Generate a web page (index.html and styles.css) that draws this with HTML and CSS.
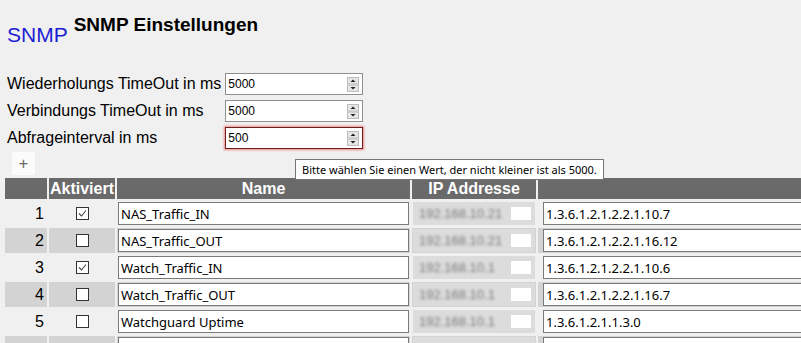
FILE: index.html
```html
<!DOCTYPE html>
<html lang="de">
<head>
    <meta charset="UTF-8">
    <title>SNMP Einstellungen</title>
    <link rel="stylesheet" href="styles.css">
</head>
<body>

    <div class="head">
        <span class="logo">SNMP</span>
        <h2 class="title">SNMP Einstellungen</h2>
    </div>

    <div class="settings">
        <label for="retryTimeout">Wiederholungs TimeOut in ms</label>
        <div class="num">
            <input type="text" id="retryTimeout" value="5000">
            <svg class="spin" width="12" height="15" viewBox="0 0 12 15"><rect x="0.5" y="0.5" width="11" height="6.5" fill="#e6e6e6" stroke="#bcbcbc"/><rect x="0.5" y="8" width="11" height="6.5" fill="#e6e6e6" stroke="#bcbcbc"/><path d="M3.5 5 L6 2.5 L8.5 5 Z" fill="#222"/><path d="M3.5 10 L6 12.5 L8.5 10 Z" fill="#222"/></svg>
        </div>

        <label for="connTimeout">Verbindungs TimeOut in ms</label>
        <div class="num">
            <input type="text" id="connTimeout" value="5000">
            <svg class="spin" width="12" height="15" viewBox="0 0 12 15"><rect x="0.5" y="0.5" width="11" height="6.5" fill="#e6e6e6" stroke="#bcbcbc"/><rect x="0.5" y="8" width="11" height="6.5" fill="#e6e6e6" stroke="#bcbcbc"/><path d="M3.5 5 L6 2.5 L8.5 5 Z" fill="#222"/><path d="M3.5 10 L6 12.5 L8.5 10 Z" fill="#222"/></svg>
        </div>

        <label for="pollInterval">Abfrageinterval in ms</label>
        <div class="num invalid">
            <input type="text" id="pollInterval" value="500">
            <svg class="spin" width="12" height="15" viewBox="0 0 12 15"><rect x="0.5" y="0.5" width="11" height="6.5" fill="#e6e6e6" stroke="#bcbcbc"/><rect x="0.5" y="8" width="11" height="6.5" fill="#e6e6e6" stroke="#bcbcbc"/><path d="M3.5 5 L6 2.5 L8.5 5 Z" fill="#222"/><path d="M3.5 10 L6 12.5 L8.5 10 Z" fill="#222"/></svg>
        </div>
    </div>

    <button class="add">+</button>

    <div class="tip">Bitte wählen Sie einen Wert, der nicht kleiner ist als 5000.</div>

    <table class="snmp">
        <colgroup>
            <col class="c-nr">
            <col class="c-akt">
            <col class="c-name">
            <col class="c-ip">
            <col class="c-oid">
        </colgroup>
        <tr>
            <th></th>
            <th>Aktiviert</th>
            <th>Name</th>
            <th>IP Addresse</th>
            <th></th>
        </tr>
        <tr>
            <td class="nr">1</td>
            <td class="akt"><svg width="13" height="13" viewBox="0 0 13 13"><rect x="0.5" y="0.5" width="12" height="12" fill="#fff" stroke="#333"/><path d="M3 6.5 L5.5 9 L10 3.5" fill="none" stroke="#444" stroke-width="1.1"/></svg></td>
            <td><input class="field" type="text" value="NAS_Traffic_IN"></td>
            <td><div class="ip"><span class="ipv">192.168.10.21</span><span class="ipend"></span></div></td>
            <td class="oid"><input class="field" type="text" value="1.3.6.1.2.1.2.2.1.10.7"></td>
        </tr>
        <tr class="alt">
            <td class="nr">2</td>
            <td class="akt"><svg width="13" height="13" viewBox="0 0 13 13"><rect x="0.5" y="0.5" width="12" height="12" fill="#fff" stroke="#333"/></svg></td>
            <td><input class="field" type="text" value="NAS_Traffic_OUT"></td>
            <td><div class="ip"><span class="ipv">192.168.10.21</span><span class="ipend"></span></div></td>
            <td class="oid"><input class="field" type="text" value="1.3.6.1.2.1.2.2.1.16.12"></td>
        </tr>
        <tr>
            <td class="nr">3</td>
            <td class="akt"><svg width="13" height="13" viewBox="0 0 13 13"><rect x="0.5" y="0.5" width="12" height="12" fill="#fff" stroke="#333"/><path d="M3 6.5 L5.5 9 L10 3.5" fill="none" stroke="#444" stroke-width="1.1"/></svg></td>
            <td><input class="field" type="text" value="Watch_Traffic_IN"></td>
            <td><div class="ip"><span class="ipv">192.168.10.1</span><span class="ipend"></span></div></td>
            <td class="oid"><input class="field" type="text" value="1.3.6.1.2.1.2.2.1.10.6"></td>
        </tr>
        <tr class="alt">
            <td class="nr">4</td>
            <td class="akt"><svg width="13" height="13" viewBox="0 0 13 13"><rect x="0.5" y="0.5" width="12" height="12" fill="#fff" stroke="#333"/></svg></td>
            <td><input class="field" type="text" value="Watch_Traffic_OUT"></td>
            <td><div class="ip"><span class="ipv">192.168.10.1</span><span class="ipend"></span></div></td>
            <td class="oid"><input class="field" type="text" value="1.3.6.1.2.1.2.2.1.16.7"></td>
        </tr>
        <tr>
            <td class="nr">5</td>
            <td class="akt"><svg width="13" height="13" viewBox="0 0 13 13"><rect x="0.5" y="0.5" width="12" height="12" fill="#fff" stroke="#333"/></svg></td>
            <td><input class="field" type="text" value="Watchguard Uptime"></td>
            <td><div class="ip"><span class="ipv">192.168.10.1</span><span class="ipend"></span></div></td>
            <td class="oid"><input class="field" type="text" value="1.3.6.1.2.1.1.3.0"></td>
        </tr>
        <tr class="alt">
            <td class="nr"></td>
            <td class="akt"></td>
            <td><input class="field" type="text" value=""></td>
            <td><div class="ip"></div></td>
            <td class="oid"><input class="field" type="text" value=""></td>
        </tr>
    </table>

</body>
</html>
```

FILE: styles.css
```css
body {
    margin: 0;
    padding: 0 0 0 3px;
    background-color: #f0f0f0;
    font-family: "Liberation Sans", Arial, sans-serif;
    color: #000;
    overflow: hidden;
    position: relative;
}

.head {
    display: flex;
    align-items: flex-start;
    gap: 6px;
    padding: 14px 0 0 4px;
}

.logo {
    color: #1d1dd2;
    font-size: 21px;
    line-height: 1.15;
    margin-top: 9px;
}

.title {
    margin: 0;
    font-size: 19px;
    line-height: 1.15;
}

.settings {
    display: grid;
    grid-template-columns: auto 138px;
    column-gap: 4px;
    row-gap: 5px;
    align-items: center;
    width: max-content;
    margin: 26px 0 0 4px;
}

label {
    font-size: 16px;
}

.num {
    display: flex;
    align-items: center;
    height: 22px;
    box-sizing: border-box;
    border: 1px solid #8f8f8f;
    background-color: #fff;
}

.num input {
    flex: 1;
    min-width: 0;
    border: 0;
    outline: 0;
    padding: 0 2px;
    background: transparent;
    font-family: "Liberation Sans", Arial, sans-serif;
    font-size: 12px;
}

.spin {
    margin-right: 3px;
}

.num.invalid {
    border-color: #6e1c1c;
    box-shadow: 0 0 2px 1px rgba(235, 70, 70, 0.6);
}

.add {
    display: block;
    width: 23px;
    height: 23px;
    margin: 3px 0 0 9px;
    padding: 0;
    border: 0;
    background-color: #fbfbfb;
    color: #666;
    font-size: 16px;
    font-family: "Liberation Sans", Arial, sans-serif;
}

.tip {
    position: absolute;
    left: 295px;
    top: 159px;
    padding: 0 6px;
    line-height: 19px;
    background-color: #fff;
    border: 1px solid #767676;
    font-family: "Noto Sans", sans-serif;
    font-size: 11px;
    white-space: nowrap;
    z-index: 2;
}

.snmp {
    table-layout: fixed;
    width: 837px;
    border-spacing: 2px;
    margin-top: 1px;
}

.c-nr { width: 42px; }
.c-akt { width: 66px; }
.c-name { width: 293px; }
.c-ip { width: 124px; }
.c-oid { width: 300px; }

.snmp th {
    background-color: #6a6a6a;
    color: #fff;
    font-size: 16px;
    font-weight: bold;
    line-height: 21px;
    padding: 0;
    white-space: nowrap;
}

.snmp td {
    padding: 1px;
}

.snmp tr.alt td {
    background-color: #d3d3d3;
}

.nr {
    text-align: right;
    font-size: 16px;
    padding-right: 3px !important;
}

.akt {
    text-align: center;
    line-height: 0;
}

.field {
    display: block;
    width: 100%;
    height: 23px;
    box-sizing: border-box;
    border: 1px solid #7a7a7a;
    padding: 0 2px;
    background-color: #fff;
    font-family: "Noto Sans", sans-serif;
    font-size: 13px;
}

.oid {
    padding-left: 5px !important;
}

.ip {
    display: flex;
    align-items: center;
    justify-content: space-between;
    height: 23px;
    padding: 0 4px 0 6px;
    background-color: #dcdcdc;
}

.ipv {
    color: #7a7a7a;
    font-size: 13px;
    filter: blur(1.4px);
}

.ipend {
    width: 20px;
    height: 13px;
    background-color: #fff;
    filter: blur(0.5px);
}
```
